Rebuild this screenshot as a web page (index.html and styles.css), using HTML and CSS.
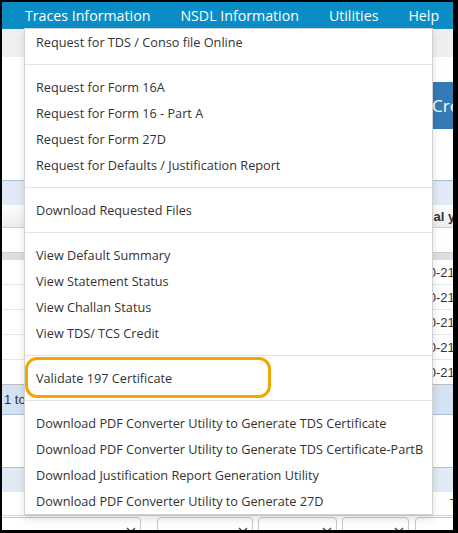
FILE: index.html
```html
<!DOCTYPE html>
<html lang="en">
<head>
<meta charset="utf-8">
<title>TRACES - Downloads menu</title>
<link rel="stylesheet" href="styles.css">
</head>
<body>
<div class="screen">
  <nav class="topnav">
    <ul class="nav-list">
      <li class="nav-item">Traces Information</li>
      <li class="nav-item">NSDL Information</li>
      <li class="nav-item">Utilities</li>
      <li class="nav-item">Help</li>
    </ul>
  </nav>

  <div class="page">
    <div class="subbar"></div>
    <div class="gap-a"></div>
    <div class="btn-row"><span class="create-btn">Create Request</span></div>
    <div class="gap-b"></div>
    <div class="panel-head"></div>
    <div class="th-row"><span class="th-text">Financial year</span></div>
    <div class="gap-c"></div>
    <div class="grid-top"></div>
    <div class="rows">
      <div class="row"><span class="cell-fy">2020-21</span></div>
      <div class="row"><span class="cell-fy">2020-21</span></div>
      <div class="row"><span class="cell-fy">2020-21</span></div>
      <div class="row"><span class="cell-fy">2020-21</span></div>
      <div class="row"><span class="cell-fy">2020-21</span></div>
    </div>
    <div class="pager"><span class="pager-text">1 to 5 of 5</span></div>
    <div class="gap-d"></div>
    <div class="panel-head2"></div>
    <div class="form-row"><span class="form-t">T</span></div>
    <div class="select-row">
      <div class="sel sel1"><svg class="chev" viewBox="0 0 10 6" width="10" height="6"><path d="M1 1 L5 5 L9 1" fill="none" stroke="#555" stroke-width="1.6"/></svg></div>
      <div class="sel sel2"><svg class="chev" viewBox="0 0 10 6" width="10" height="6"><path d="M1 1 L5 5 L9 1" fill="none" stroke="#555" stroke-width="1.6"/></svg></div>
      <div class="sel sel3"><svg class="chev" viewBox="0 0 10 6" width="10" height="6"><path d="M1 1 L5 5 L9 1" fill="none" stroke="#555" stroke-width="1.6"/></svg></div>
      <div class="sel sel4"><svg class="chev" viewBox="0 0 10 6" width="10" height="6"><path d="M1 1 L5 5 L9 1" fill="none" stroke="#555" stroke-width="1.6"/></svg></div>
      <div class="sel sel5"></div>
    </div>
  </div>

  <ul class="dropdown">
    <li class="dd-item">Request for TDS / Conso file Online</li>
    <li class="dd-divider"></li>
    <li class="dd-item">Request for Form 16A</li>
    <li class="dd-item">Request for Form 16 - Part A</li>
    <li class="dd-item">Request for Form 27D</li>
    <li class="dd-item">Request for Defaults / Justification Report</li>
    <li class="dd-divider"></li>
    <li class="dd-item">Download Requested Files</li>
    <li class="dd-divider"></li>
    <li class="dd-item">View Default Summary</li>
    <li class="dd-item">View Statement Status</li>
    <li class="dd-item">View Challan Status</li>
    <li class="dd-item">View TDS/ TCS Credit</li>
    <li class="dd-divider"></li>
    <li class="dd-item">Validate 197 Certificate</li>
    <li class="dd-divider"></li>
    <li class="dd-item">Download PDF Converter Utility to Generate TDS Certificate</li>
    <li class="dd-item">Download PDF Converter Utility to Generate TDS Certificate-PartB</li>
    <li class="dd-item">Download Justification Report Generation Utility</li>
    <li class="dd-item">Download PDF Converter Utility to Generate 27D</li>
  </ul>

  <div class="highlight"></div>
</div>
</body>
</html>
```

FILE: styles.css
```css
html, body {
  margin: 0;
  padding: 0;
  background: #000;
}

.screen {
  position: relative;
  margin: 2px 0 0 2px;
  width: 451px;
  height: 528px;
  overflow: hidden;
  background: #fff;
  font-family: "Open Sans", "Noto Sans", sans-serif;
}

/* top navigation */
.topnav {
  height: 27px;
  background: #0a8dc7;
}
.nav-list {
  list-style: none;
  margin: 0;
  padding: 0 0 0 8px;
  display: flex;
  height: 27px;
  align-items: center;
}
.nav-item {
  color: #fff;
  font-size: 14.2px;
  padding: 0 15px;
  white-space: nowrap;
  line-height: 27px;
}

/* background page */
.page {
  display: flex;
  flex-direction: column;
}
.subbar { height: 28px; background: #eeeff1; }
.gap-a { height: 25px; }
.btn-row {
  height: 47px;
  display: flex;
}
.create-btn {
  margin-left: 420px;
  padding-left: 10px;
  background: #337ab7;
  color: #fff;
  font-size: 17px;
  line-height: 47px;
  white-space: nowrap;
  flex: 1;
}
.gap-b { height: 51px; }
.panel-head {
  height: 24px;
  border-top: 1px solid #a9c1de;
  background: #e0e9f5;
}
.th-row {
  height: 22px;
  border-bottom: 1px solid #cfcfcf;
  background: linear-gradient(#fdfdfd, #ececec);
  display: flex;
  align-items: center;
}
.th-text {
  margin-left: 386px;
  font-family: "Liberation Sans", Arial, sans-serif;
  font-weight: bold;
  font-size: 13px;
  color: #333;
  white-space: nowrap;
}
.gap-c { height: 24px; }
.grid-top { height: 8px; background: #dedede; border-top: 1px solid #d0d0d0; box-sizing: border-box; }
.rows { display: flex; flex-direction: column; }
.row {
  height: 24px;
  border-bottom: 1px solid #e6e6e6;
  display: flex;
  align-items: center;
}
.row:last-child { border-bottom-color: #bdbdbd; }
.cell-fy {
  margin-left: 405px;
  font-family: "Liberation Sans", Arial, sans-serif;
  font-size: 13px;
  color: #333;
  white-space: nowrap;
}
.pager {
  height: 29px;
  background: #d5e2f1;
  border-bottom: 1px solid #a9c1de;
  display: flex;
  align-items: center;
}
.pager-text {
  margin-left: 2px;
  font-family: "Liberation Sans", Arial, sans-serif;
  font-size: 13px;
  color: #333;
  white-space: nowrap;
}
.gap-d { height: 52px; }
.panel-head2 {
  height: 24px;
  border-top: 1px solid #a9c1de;
  background: #e0e9f5;
}
.form-row {
  height: 23px;
  border-bottom: 1px solid #d6d6d6;
  display: flex;
  align-items: center;
}
.form-t {
  margin-left: 448px;
  font-family: "Liberation Sans", Arial, sans-serif;
  font-size: 12px;
  color: #333;
}
.select-row {
  display: flex;
  padding-top: 1px;
}
.sel {
  height: 22px;
  border: 1px solid #c8c8c8;
  border-radius: 4px;
  box-sizing: border-box;
  display: flex;
  justify-content: flex-end;
  align-items: center;
  padding-right: 4px;
  flex: none;
}
.chev { display: block; margin-top: 4px; }
.sel1 { width: 141px; margin-left: -2px; }
.sel2 { width: 96px; margin-left: 16px; }
.sel3 { width: 79px; margin-left: 5px; }
.sel4 { width: 67px; margin-left: 5px; }
.sel5 { width: 60px; margin-left: 6px; }

/* dropdown menu (overlays the page) */
.dropdown {
  position: absolute;
  top: 26px;
  left: 22px;
  width: 409px;
  box-sizing: border-box;
  margin: 0;
  padding: 0;
  list-style: none;
  background: #fff;
  border: 1px solid rgba(0, 0, 0, 0.18);
  box-shadow: 0 4px 8px rgba(0, 0, 0, 0.12);
}
.dd-item {
  height: 26px;
  line-height: 26px;
  padding-left: 11px;
  font-size: 12.7px;
  color: #333;
  white-space: nowrap;
}
.dd-divider {
  height: 1px;
  margin: 9px 0;
  background: #e3e3e3;
}

/* annotation */
.highlight {
  position: absolute;
  left: 23px;
  top: 355px;
  width: 246px;
  height: 41px;
  box-sizing: border-box;
  border: 3px solid #f0a800;
  border-radius: 12px;
}
```
